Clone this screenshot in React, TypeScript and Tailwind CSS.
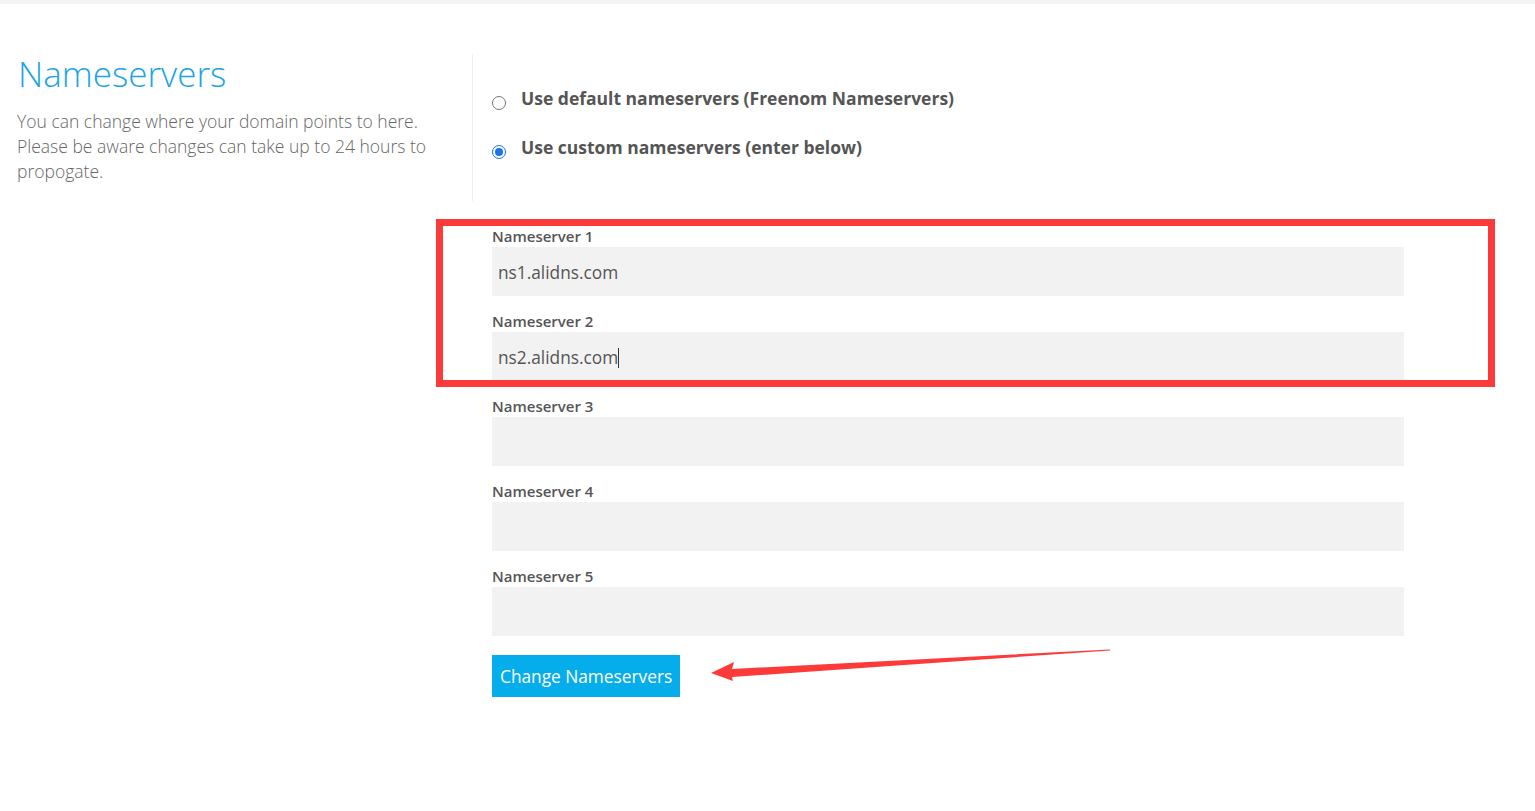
import React from "react";

const font = { fontFamily: '"Open Sans", "Noto Sans", Arial, sans-serif' };

function Field({ label, value, caret }: { label: string; value?: string; caret?: boolean }) {
  return (
    <div className="flex flex-col">
      <label className="text-[15px] leading-[19px] font-semibold text-[#555]">{label}</label>
      <div className="mt-[1px] h-[49px] w-[912px] bg-[#f2f2f2] flex items-center pl-[6px] pt-[2px] text-[17.3px] text-[#555]">
        {value}
        {caret && <span className="inline-block w-px h-[20px] bg-[#333]" />}
      </div>
    </div>
  );
}

export default function App() {
  return (
    <div className="relative min-h-screen bg-white" style={font}>
      <div className="h-1 bg-[#f4f4f4]" />
      <div className="flex mt-[50px]">
        <div className="w-[473px] h-[147px] border-r border-[#eeeeee] pl-[17px] pr-[30px]">
          <h1 className="text-[35px] leading-[40px] font-light text-[#1ba4e6] pl-[1px]">Nameservers</h1>
          <p className="mt-[15px] text-[17.5px] leading-[25px] font-light text-[#666]">
            You can change where your domain points to here. Please be aware changes can take up to 24 hours to propogate.
          </p>
        </div>
        <div className="pl-[19px] pt-[32px] flex flex-col gap-[25px]">
          <label className="flex items-center gap-[15px] text-[17.5px] leading-[24px] font-bold text-[#555]">
            <span className="mt-[9px] w-[14px] h-[14px] rounded-full border border-[#767676] bg-white" />
            Use default nameservers (Freenom Nameservers)
          </label>
          <label className="flex items-center gap-[15px] text-[17.5px] leading-[24px] font-bold text-[#555]">
            <span className="mt-[9px] w-[14px] h-[14px] rounded-full border-[1.5px] border-[#1a73e8] bg-white flex items-center justify-center">
              <span className="w-[8px] h-[8px] rounded-full bg-[#1a73e8]" />
            </span>
            Use custom nameservers (enter below)
          </label>
        </div>
      </div>
      <div className="pl-[492px] mt-[26px] flex flex-col gap-[16px]">
        <Field label="Nameserver 1" value="ns1.alidns.com" />
        <Field label="Nameserver 2" value="ns2.alidns.com" caret />
        <Field label="Nameserver 3" />
        <Field label="Nameserver 4" />
        <Field label="Nameserver 5" />
        <div className="mt-[3px]">
          <button className="h-[42px] px-[8px] pt-[2px] bg-[#05adea] text-white text-[17.3px]">Change Nameservers</button>
        </div>
      </div>

      <div className="absolute left-[436px] top-[219px] w-[1059px] h-[168px] border-[7px] border-[#fd3a3a]" />
      <svg className="absolute left-0 top-0" width="1535" height="811" viewBox="0 0 1535 811">
        <polygon points="1110,649.5 1110,650.5 732,677 733,681 711,673 734,662 732,669" fill="#fd3a3a" />
      </svg>
    </div>
  );
}
